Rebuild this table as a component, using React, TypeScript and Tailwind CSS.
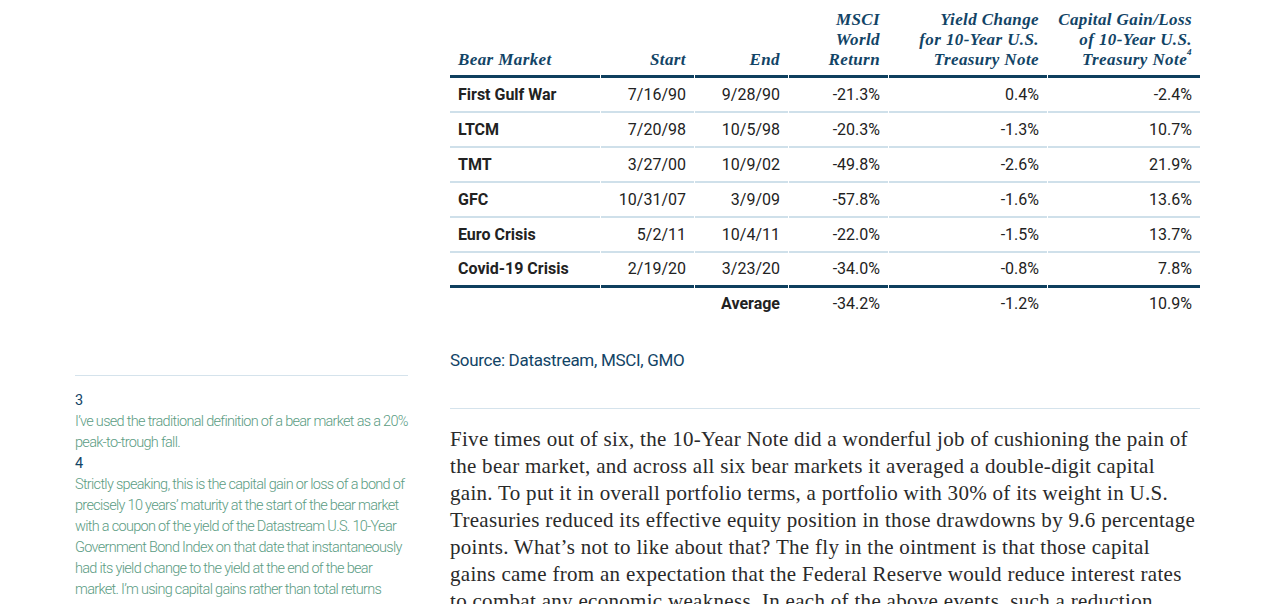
const rows = [
  { name: "First Gulf War", start: "7/16/90", end: "9/28/90", msci: "-21.3%", yld: "0.4%", cap: "-2.4%" },
  { name: "LTCM", start: "7/20/98", end: "10/5/98", msci: "-20.3%", yld: "-1.3%", cap: "10.7%" },
  { name: "TMT", start: "3/27/00", end: "10/9/02", msci: "-49.8%", yld: "-2.6%", cap: "21.9%" },
  { name: "GFC", start: "10/31/07", end: "3/9/09", msci: "-57.8%", yld: "-1.6%", cap: "13.6%" },
  { name: "Euro Crisis", start: "5/2/11", end: "10/4/11", msci: "-22.0%", yld: "-1.5%", cap: "13.7%" },
  { name: "Covid-19 Crisis", start: "2/19/20", end: "3/23/20", msci: "-34.0%", yld: "-0.8%", cap: "7.8%" },
];

const cols = "grid grid-cols-[150px_93px_93px_99px_158px_152px] gap-x-px";

function HeadCell({ children, left }: { children: React.ReactNode; left?: boolean }) {
  return (
    <div
      className={`flex flex-col justify-end border-b-[3px] border-[#0e3f5e] pb-[5px] px-2 leading-[20px] text-[17px] tracking-[0.4px] font-bold italic text-[#124466] ${left ? "text-left" : "text-right"}`}
    >
      {children}
    </div>
  );
}

function Cell({ children, left, last }: { children: React.ReactNode; left?: boolean; last?: boolean }) {
  return (
    <div
      className={`h-[35px] flex items-center px-2 text-[16px] text-[#222] ${left ? "justify-start font-bold" : "justify-end"} ${last ? "border-b-[3px] border-[#0e3f5e]" : "border-b-2 border-[#cfe0ea]"}`}
    >
      {children}
    </div>
  );
}

function AvgCell({ children, bold }: { children?: React.ReactNode; bold?: boolean }) {
  return (
    <div className={`h-[32px] flex items-center justify-end px-2 text-[16px] text-[#222] ${bold ? "font-bold" : ""}`}>
      {children}
    </div>
  );
}

export default function App() {
  return (
    <div className="w-[1275px] h-[604px] overflow-hidden bg-white flex">
      {/* Footnotes */}
      <aside className="w-[333px] ml-[75px] pt-[375px] font-['Roboto',sans-serif]">
        <div className="border-t border-[#d5e3ec] pt-[14px] text-[14.5px] tracking-[-0.7px] leading-[21px] font-light text-[#5b9c83]">
          <div className="text-[#124466] font-normal tracking-normal">3</div>
          <p>I’ve used the traditional definition of a bear market as a 20% peak-to-trough fall.</p>
          <div className="text-[#124466] font-normal tracking-normal">4</div>
          <p>
            Strictly speaking, this is the capital gain or loss of a bond of precisely 10 years’ maturity at the start of
            the bear market with a coupon of the yield of the Datastream U.S. 10-Year Government Bond Index on that date
            that instantaneously had its yield change to the yield at the end of the bear market. I’m using capital gains
            rather than total returns
          </p>
        </div>
      </aside>

      <main className="w-[750px] ml-[42px] pt-[10px]">
        <div className="font-['Roboto',sans-serif]">
          <div className={`${cols} font-['Liberation_Serif',serif]`}>
            <HeadCell left>Bear Market</HeadCell>
            <HeadCell>Start</HeadCell>
            <HeadCell>End</HeadCell>
            <HeadCell>
              MSCI
              <br />
              World
              <br />
              Return
            </HeadCell>
            <HeadCell>
              Yield Change
              <br />
              for 10-Year U.S.
              <br />
              Treasury Note
            </HeadCell>
            <HeadCell>
              Capital Gain/Loss
              <br />
              of 10-Year U.S.
              <br />
              <span>
                Treasury Note<sup className="text-[9px] align-[6px]">4</sup>
              </span>
            </HeadCell>
          </div>
          <div className={cols}>
            {rows.map((r, i) => {
              const last = i === rows.length - 1;
              return [
                <Cell key={r.name + "n"} left last={last}>{r.name}</Cell>,
                <Cell key={r.name + "s"} last={last}>{r.start}</Cell>,
                <Cell key={r.name + "e"} last={last}>{r.end}</Cell>,
                <Cell key={r.name + "m"} last={last}>{r.msci}</Cell>,
                <Cell key={r.name + "y"} last={last}>{r.yld}</Cell>,
                <Cell key={r.name + "c"} last={last}>{r.cap}</Cell>,
              ];
            })}
            <AvgCell />
            <AvgCell />
            <AvgCell bold>Average</AvgCell>
            <AvgCell>-34.2%</AvgCell>
            <AvgCell>-1.2%</AvgCell>
            <AvgCell>10.9%</AvgCell>
          </div>
          <p className="mt-[28px] text-[17px] tracking-[-0.3px] text-[#124466]">Source: Datastream, MSCI, GMO</p>
        </div>

        <div className="mt-[34px] border-t border-[#d5e3ec] pt-[17px]">
          <p className="font-['Liberation_Serif',serif] text-[21px] tracking-[0.3px] leading-[27px] text-[#2a2a2a]">
            Five times out of six, the 10-Year Note did a wonderful job of cushioning the pain of the bear market, and
            across all six bear markets it averaged a double-digit capital gain. To put it in overall portfolio terms, a
            portfolio with 30% of its weight in U.S. Treasuries reduced its effective equity position in those drawdowns by
            9.6 percentage points. What’s not to like about that? The fly in the ointment is that those capital gains came
            from an expectation that the Federal Reserve would reduce interest rates to combat any economic weakness. In
            each of the above events, such a reduction
          </p>
        </div>
      </main>
    </div>
  );
}
